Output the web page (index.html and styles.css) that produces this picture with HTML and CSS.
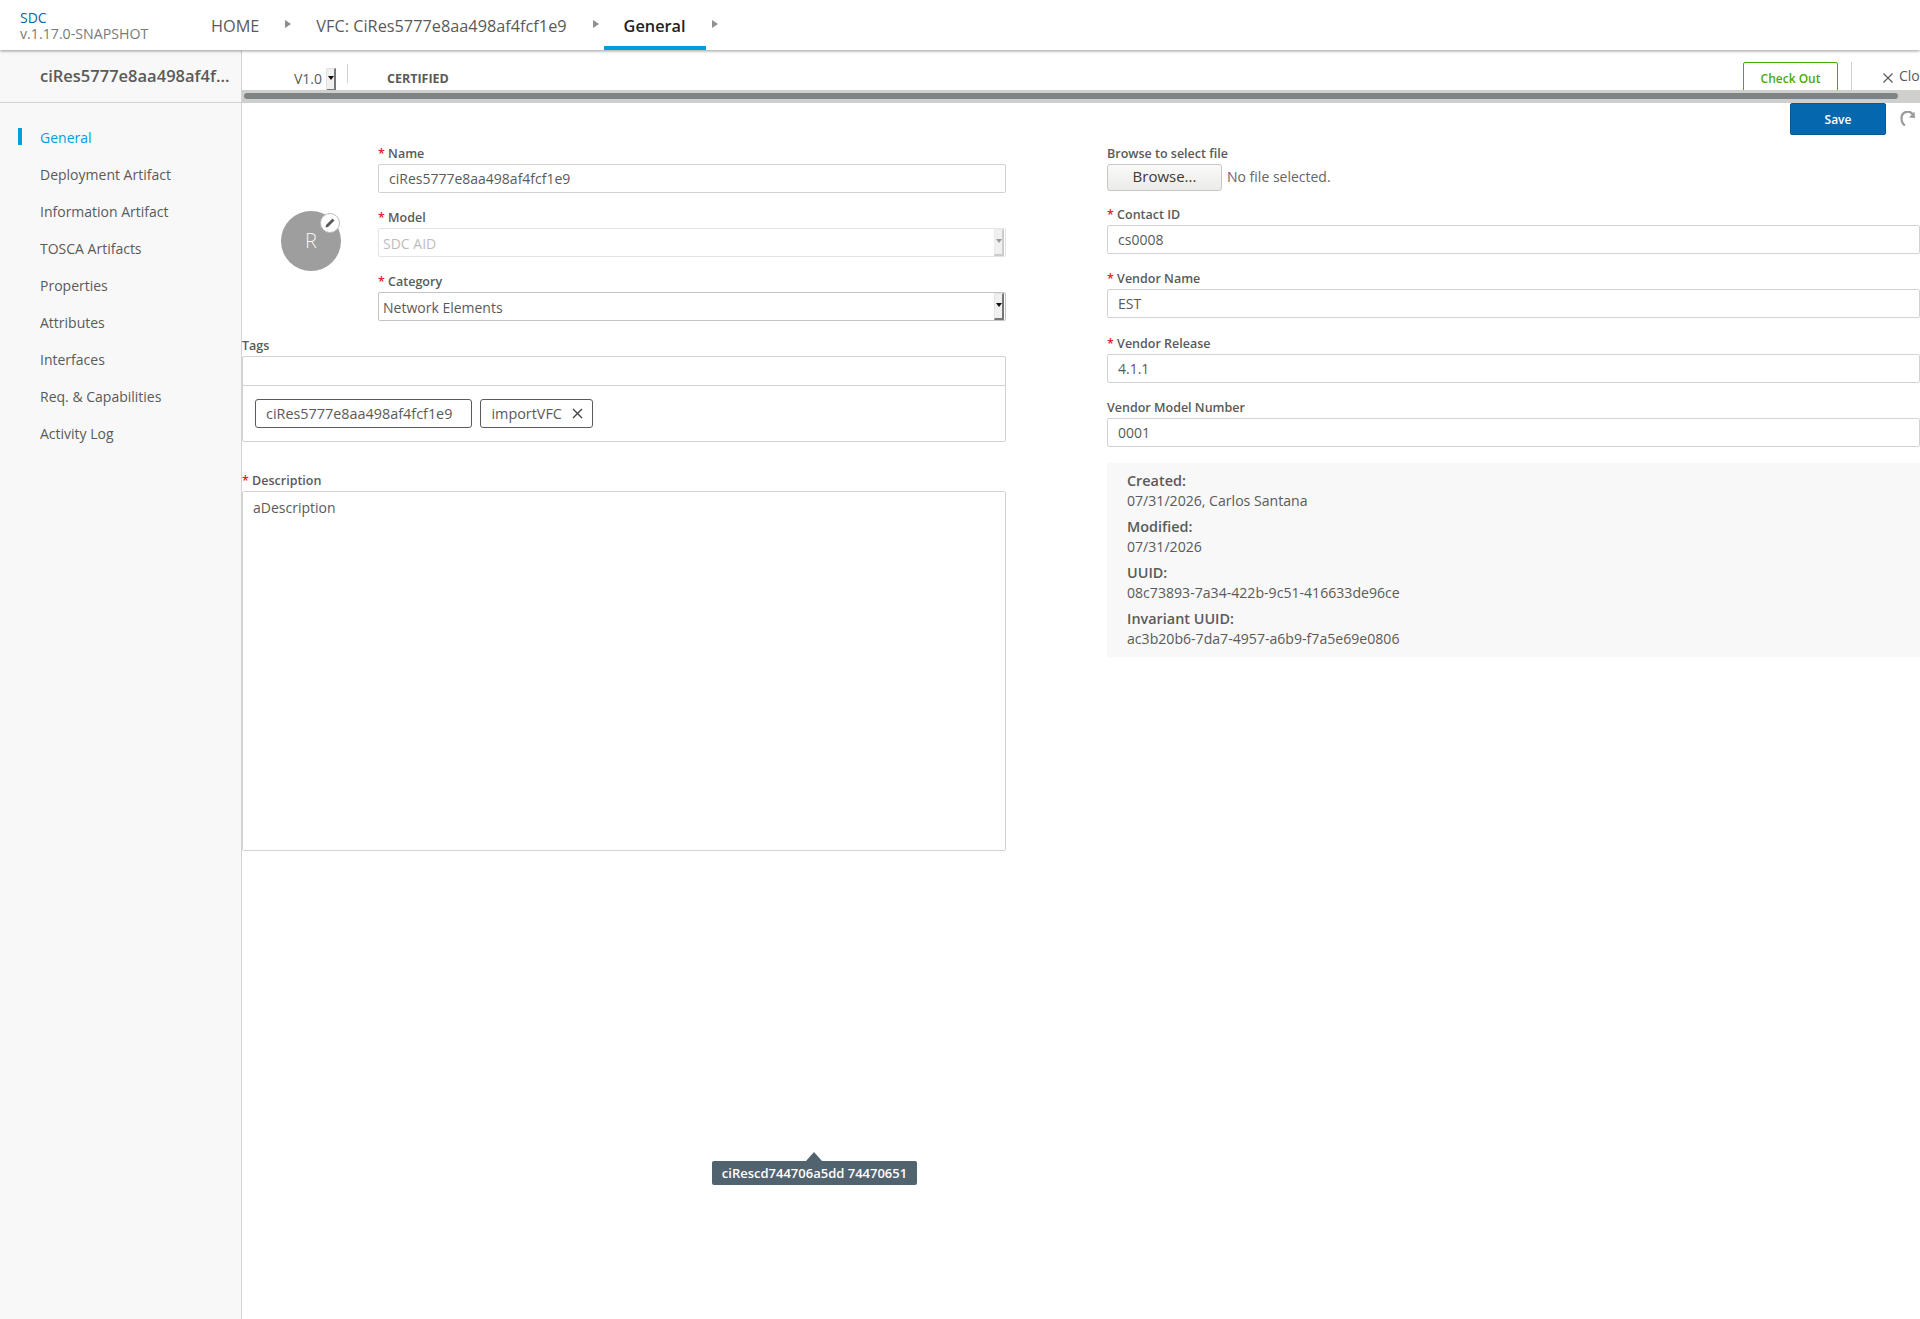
FILE: index.html
```html
<!DOCTYPE html>
<html lang="en">
<head>
    <meta charset="UTF-8">
    <title>SDC - General</title>
    <link rel="stylesheet" href="styles.css">
</head>
<body>
    <header class="top-bar">
        <div class="brand">
            <div class="brand-name">SDC</div>
            <div class="brand-version">v.1.17.0-SNAPSHOT</div>
        </div>
        <nav class="crumbs">
            <a class="crumb">HOME</a>
            <span class="crumb-arrow"></span>
            <a class="crumb">VFC: CiRes5777e8aa498af4fcf1e9</a>
            <span class="crumb-arrow"></span>
            <a class="crumb crumb-active">General</a>
            <span class="crumb-arrow"></span>
        </nav>
    </header>

    <div class="workspace">
        <aside class="sidebar">
            <div class="sidebar-title">ciRes5777e8aa498af4f...</div>
            <ul class="side-nav">
                <li class="side-item side-item-active">General</li>
                <li class="side-item">Deployment Artifact</li>
                <li class="side-item">Information Artifact</li>
                <li class="side-item">TOSCA Artifacts</li>
                <li class="side-item">Properties</li>
                <li class="side-item">Attributes</li>
                <li class="side-item">Interfaces</li>
                <li class="side-item">Req. &amp; Capabilities</li>
                <li class="side-item">Activity Log</li>
            </ul>
        </aside>

        <main class="content">
            <div class="toolbar">
                <div class="version">V1.0<span class="select-btn select-btn-small"><i class="select-caret"></i></span></div>
                <div class="state">CERTIFIED</div>
                <button class="btn-checkout">Check Out</button>
                <div class="close-action">
                    <svg class="close-icon" width="10" height="10" viewBox="0 0 10 10"><path d="M0.5 0.5L9.5 9.5M9.5 0.5L0.5 9.5" stroke="#5a5a5a" stroke-width="1.2" fill="none"/></svg>
                    <span>Close</span>
                </div>
            </div>
            <div class="h-scroll"><div class="h-scroll-thumb"></div></div>

            <div class="actions">
                <button class="btn-save">Save</button>
                <svg class="reload-icon" width="15" height="15" viewBox="0 0 15 15"><path d="M12.500 3A6.200 6.200 0 0 0 1.500 7c0 3 1 6 3.500 7.500" stroke="#9b9b9b" stroke-width="2.200" fill="none"/><path d="M9 6.500L15 7L14.500 0.500Z" fill="#9b9b9b"/></svg>
            </div>

            <div class="form-grid">
                <section class="form-left">
                    <div class="identity">
                        <div class="icon-col">
                            <div class="avatar">R
                                <span class="avatar-edit">
                                    <svg width="12" height="12" viewBox="0 0 12 12"><path d="M8.500 1.500L10.500 3.500L4 10L1.500 10.500L2 8Z" fill="#5a5a5a"/></svg>
                                </span>
                            </div>
                        </div>
                        <div class="identity-fields">
                            <div class="field">
                                <label class="field-label"><b class="req">*</b> Name</label>
                                <div class="input">ciRes5777e8aa498af4fcf1e9</div>
                            </div>
                            <div class="field">
                                <label class="field-label"><b class="req">*</b> Model</label>
                                <div class="input input-select input-disabled">SDC AID<span class="select-btn select-btn-off"><i class="select-caret"></i></span></div>
                            </div>
                            <div class="field">
                                <label class="field-label"><b class="req">*</b> Category</label>
                                <div class="input input-select input-dark">Network Elements<span class="select-btn"><i class="select-caret"></i></span></div>
                            </div>
                        </div>
                    </div>

                    <label class="field-label">Tags</label>
                    <div class="tags-box">
                        <div class="tags-input"></div>
                        <div class="tags-list">
                            <span class="tag tag-fixed">ciRes5777e8aa498af4fcf1e9</span>
                            <span class="tag">importVFC
                                <svg class="tag-x" width="11" height="11" viewBox="0 0 11 11"><path d="M1 1L10 10M10 1L1 10" stroke="#444" stroke-width="1.400" fill="none"/></svg>
                            </span>
                        </div>
                    </div>

                    <label class="field-label desc-label"><b class="req">*</b> Description</label>
                    <div class="textarea">aDescription</div>
                </section>

                <section class="form-right">
                    <div class="field field-file">
                        <label class="field-label">Browse to select file</label>
                        <div class="file-row">
                            <button class="btn-browse">Browse...</button>
                            <span class="file-name">No file selected.</span>
                        </div>
                    </div>
                    <div class="field">
                        <label class="field-label"><b class="req">*</b> Contact ID</label>
                        <div class="input">cs0008</div>
                    </div>
                    <div class="field field-roomy">
                        <label class="field-label"><b class="req">*</b> Vendor Name</label>
                        <div class="input">EST</div>
                    </div>
                    <div class="field">
                        <label class="field-label"><b class="req">*</b> Vendor Release</label>
                        <div class="input">4.1.1</div>
                    </div>
                    <div class="field field-last">
                        <label class="field-label">Vendor Model Number</label>
                        <div class="input">0001</div>
                    </div>
                    <div class="meta">
                        <div class="meta-key">Created:</div>
                        <div class="meta-value">07/31/2026, Carlos Santana</div>
                        <div class="meta-key">Modified:</div>
                        <div class="meta-value">07/31/2026</div>
                        <div class="meta-key">UUID:</div>
                        <div class="meta-value">08c73893-7a34-422b-9c51-416633de96ce</div>
                        <div class="meta-key">Invariant UUID:</div>
                        <div class="meta-value">ac3b20b6-7da7-4957-a6b9-f7a5e69e0806</div>
                    </div>
                </section>
            </div>
        </main>
    </div>

    <div class="tooltip">ciRescd744706a5dd 74470651</div>
</body>
</html>
```

FILE: styles.css
```css
html, body {
    height: 100%;
}
body {
    margin: 0;
    font-family: "Open Sans", sans-serif;
    font-size: 14px;
    color: #5a5a5a;
    background: #fff;
    overflow: hidden;
    display: flex;
    flex-direction: column;
}
button {
    font-family: inherit;
    cursor: pointer;
}

/* top bar */
.top-bar {
    flex: none;
    height: 50px;
    display: flex;
    background: #fff;
    box-shadow: 0 1px 3px rgba(0, 0, 0, 0.4);
    position: relative;
    z-index: 2;
}
.brand {
    width: 171px;
    padding: 10px 0 0 20px;
    font-size: 14px;
    line-height: 16px;
}
.brand-name {
    color: #0568ae;
}
.brand-version {
    color: #7a7a7a;
    font-size: 14.2px;
}
.crumbs {
    display: flex;
}
.crumb {
    padding: 0 20px;
    font-size: 16.3px;
    line-height: 52px;
    color: #5a5a5a;
}
.crumb-active {
    color: #222;
    font-weight: 600;
    border-bottom: 4px solid #009fdb;
    height: 46px;
}
.crumb-arrow {
    width: 0;
    height: 0;
    margin: 20px 5px 0 6px;
    border-left: 6px solid #8f8f8f;
    border-top: 4px solid transparent;
    border-bottom: 4px solid transparent;
}

/* layout */
.workspace {
    flex: 1;
    display: flex;
    min-height: 0;
}
.sidebar {
    flex: none;
    width: 241px;
    background: #f8f8f8;
    border-right: 1px solid #d2d2d2;
}
.sidebar-title {
    height: 52px;
    padding-left: 40px;
    font-size: 16.5px;
    font-weight: 600;
    line-height: 52px;
    white-space: nowrap;
    border-bottom: 1px solid #d2d2d2;
}
.side-nav {
    list-style: none;
    margin: 0;
    padding: 16px 0 0;
}
.side-item {
    height: 37px;
    line-height: 37px;
    padding-left: 40px;
    position: relative;
}
.side-item-active {
    color: #009fdb;
}
.side-item-active::before {
    content: "";
    position: absolute;
    left: 18px;
    top: 9px;
    width: 4px;
    height: 17px;
    background: #009fdb;
}
.content {
    flex: 1;
    min-width: 0;
    overflow: hidden;
}

/* version toolbar */
.toolbar {
    height: 40px;
    display: flex;
    align-items: flex-start;
    overflow: hidden;
}
.version {
    display: flex;
    align-items: flex-start;
    margin: 18px 0 0 52px;
    width: 53px;
    line-height: 22px;
}
.select-btn {
    margin-left: auto;
    width: 7px;
    background: #f0f0f0;
    border: 1px solid #e4e4e4;
    border-right: 2px solid #777;
    border-bottom: 2px solid #777;
    display: flex;
    align-items: center;
    justify-content: center;
    flex: none;
}
.select-btn-small {
    margin: 0 0 0 4px;
    height: 20px;
}
.select-caret {
    width: 0;
    height: 0;
    margin-bottom: 3px;
    border-left: 3px solid transparent;
    border-right: 3px solid transparent;
    border-top: 4px solid #111;
}
.state {
    margin: 14px 0 0 0;
    padding-left: 39px;
    height: 19px;
    border-left: 1px solid #d2d2d2;
    font-size: 12.5px;
    font-weight: 700;
    line-height: 30px;
}
.btn-checkout {
    margin: 12px 0 0 auto;
    width: 95px;
    height: 34px;
    padding: 0 0 2px;
    background: #fff;
    border: 1px solid #4ca90c;
    border-radius: 2px;
    color: #4ca90c;
    font-size: 12px;
    font-weight: 600;
}
.close-action {
    margin: 12px 0 0 13px;
    height: 28px;
    width: 69px;
    flex: none;
    padding-left: 31px;
    box-sizing: border-box;
    border-left: 1px solid #d2d2d2;
    display: flex;
    line-height: 28px;
}
.close-icon {
    margin: 11px 6px 0 0;
    flex: none;
}
.h-scroll {
    height: 13px;
    background: #cfcfcd;
    padding: 3px 0 0 2px;
    box-sizing: border-box;
}
.h-scroll-thumb {
    width: 1654px;
    height: 6px;
    border-radius: 3px;
    background: #7f8383;
}
.actions {
    height: 44px;
    display: flex;
    align-items: flex-start;
    padding-left: 1548px;
}
.btn-save {
    width: 96px;
    height: 32px;
    background: #0568ae;
    border: 1px solid #045a97;
    border-radius: 2px;
    color: #fff;
    font-size: 12px;
    font-weight: 600;
}
.reload-icon {
    margin: 8px 0 0 14px;
    flex: none;
}

/* form */
.form-grid {
    display: grid;
    grid-template-columns: 764px 813px;
    column-gap: 101px;
}
.identity {
    display: flex;
}
.icon-col {
    width: 136px;
    flex: none;
    padding: 64px 0 0 39px;
    box-sizing: border-box;
}
.avatar {
    position: relative;
    width: 60px;
    height: 60px;
    border-radius: 50%;
    background: #9e9e9e;
    color: #f4f4f4;
    font-size: 20px;
    font-weight: 300;
    line-height: 60px;
    text-align: center;
}
.avatar-edit {
    position: absolute;
    top: 2px;
    right: 1px;
    width: 18px;
    height: 18px;
    border-radius: 50%;
    background: #fff;
    border: 1px solid #bbb;
    display: flex;
    align-items: center;
    justify-content: center;
}
.identity-fields {
    flex: 1;
}
.field {
    margin-bottom: 18px;
}
.field-file {
    margin-bottom: 17px;
}
.field-roomy {
    margin-bottom: 19px;
}
.field-last {
    margin-bottom: 16px;
}
.field-label {
    display: block;
    height: 17px;
    font-size: 12.5px;
    font-weight: 600;
    line-height: 13px;
    white-space: nowrap;
}
.req {
    color: #e8202a;
    font-weight: 600;
}
.input {
    height: 29px;
    box-sizing: border-box;
    padding: 0 10px;
    border: 1px solid #d2d2d2;
    border-radius: 2px;
    line-height: 27px;
    background: #fff;
}
.input-select {
    display: flex;
    padding: 0 1px 0 4px;
    line-height: 29px;
}
.input-disabled {
    color: #bdbdbd;
    border-color: #e4e4e4;
}
.input-dark {
    color: #5a5a5a;
    border-color: #c4c4c4;
}
.select-btn-off {
    border-color: #ececec;
    border-right-color: #ccc;
    border-bottom-color: #ccc;
}
.select-btn-off .select-caret {
    border-top-color: #999;
}
.tags-box {
    border: 1px solid #d2d2d2;
    border-radius: 2px;
}
.tags-input {
    height: 28px;
    border-bottom: 1px solid #d2d2d2;
}
.tags-list {
    display: flex;
    gap: 8px;
    padding: 13px 12px;
}
.tag {
    height: 29px;
    box-sizing: border-box;
    padding: 0 9px 0 10px;
    border: 1px solid #5a5a5a;
    border-radius: 3px;
    font-size: 14.4px;
    line-height: 27px;
    display: flex;
    align-items: center;
}
.tag-fixed {
    padding-right: 19px;
}
.tag-x {
    margin-left: 10px;
}
.desc-label {
    margin-top: 32px;
}
.textarea {
    height: 360px;
    box-sizing: border-box;
    padding: 6px 10px;
    border: 1px solid #d2d2d2;
    border-radius: 2px;
    line-height: 20px;
}
.file-row {
    display: flex;
    align-items: center;
}
.btn-browse {
    width: 115px;
    height: 27px;
    padding: 0 0 4px;
    background: linear-gradient(#fafafa, #ebebe9);
    border: 1px solid #c9c7c2;
    border-radius: 3px;
    color: #3a3a3a;
    font-size: 15px;
}
.file-name {
    margin: 0 0 2px 5px;
    color: #666;
}
.meta {
    padding: 8px 20px;
    background: #f8f8f8;
    line-height: 20px;
}
.meta-key {
    font-size: 14.4px;
    font-weight: 600;
    margin-top: 6px;
}
.meta-key:first-child {
    margin-top: 0;
}
.meta-value {
    font-size: 14.1px;
}

/* hover tooltip */
.tooltip {
    position: absolute;
    left: 712px;
    top: 1161px;
    width: 205px;
    height: 24px;
    background: #51636f;
    border-radius: 2px;
    color: #fff;
    font-size: 13px;
    font-weight: 600;
    line-height: 24px;
    text-align: center;
    white-space: nowrap;
}
.tooltip::before {
    content: "";
    position: absolute;
    left: 94px;
    top: -9px;
    border-left: 8px solid transparent;
    border-right: 8px solid transparent;
    border-bottom: 9px solid #51636f;
}
```
